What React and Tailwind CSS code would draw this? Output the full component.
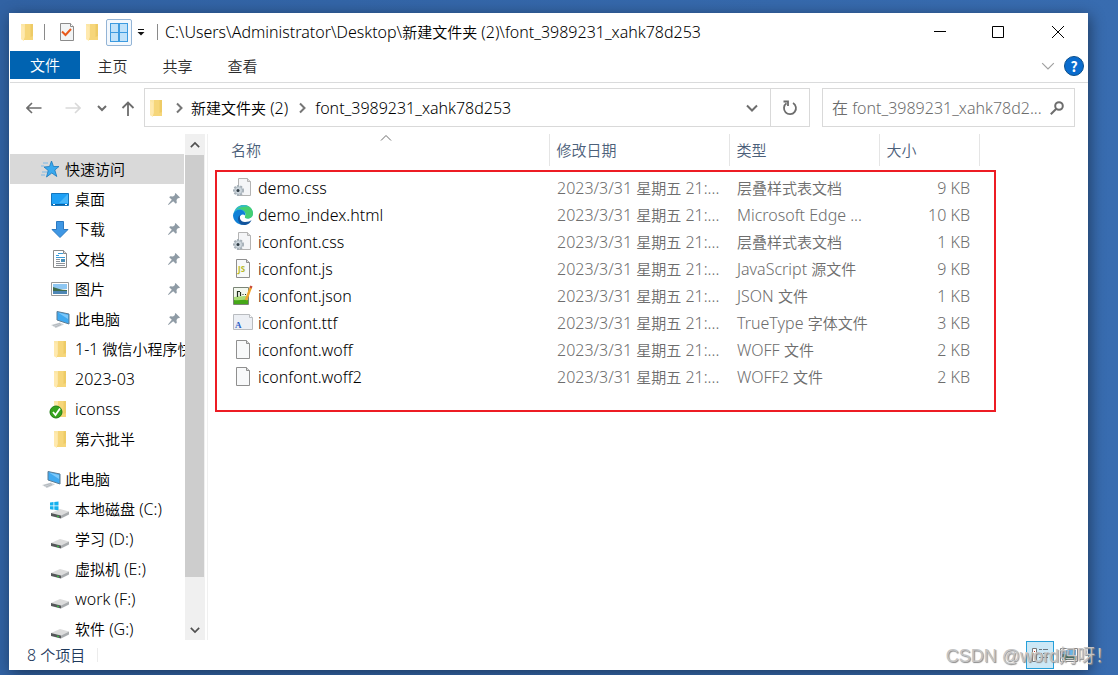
import React from 'react';

const files = [
  { name: 'demo.css', icon: 'css', type: '层叠样式表文档', size: '9 KB' },
  { name: 'demo_index.html', icon: 'edge', type: 'Microsoft Edge ...', size: '10 KB' },
  { name: 'iconfont.css', icon: 'css', type: '层叠样式表文档', size: '1 KB' },
  { name: 'iconfont.js', icon: 'js', type: 'JavaScript 源文件', size: '9 KB' },
  { name: 'iconfont.json', icon: 'json', type: 'JSON 文件', size: '1 KB' },
  { name: 'iconfont.ttf', icon: 'ttf', type: 'TrueType 字体文件', size: '3 KB' },
  { name: 'iconfont.woff', icon: 'blank', type: 'WOFF 文件', size: '2 KB' },
  { name: 'iconfont.woff2', icon: 'blank', type: 'WOFF2 文件', size: '2 KB' },
];

const quickAccess = [
  { label: '桌面', icon: 'desktop', pinned: true },
  { label: '下载', icon: 'download', pinned: true },
  { label: '文档', icon: 'document', pinned: true },
  { label: '图片', icon: 'picture', pinned: true },
  { label: '此电脑', icon: 'computer', pinned: true },
  { label: '1-1 微信小程序快', icon: 'folder' },
  { label: '2023-03', icon: 'folder' },
  { label: 'iconss', icon: 'synced' },
  { label: '第六批半', icon: 'folder' },
];

const drives = [
  { label: '本地磁盘 (C:)', icon: 'system' },
  { label: '学习 (D:)', icon: 'drive' },
  { label: '虚拟机 (E:)', icon: 'drive' },
  { label: 'work (F:)', icon: 'drive' },
  { label: '软件 (G:)', icon: 'drive' },
];

// Latin runs get their own face and size, Chinese runs inherit from the page
function Mixed({ text }) {
  return text.split(/([\u4e00-\u9fff]+)/).map((run, idx) =>
    idx % 2 ? (
      run
    ) : (
      <span key={idx} className="font-['Noto_Sans',sans-serif] text-[16px]">
        {run}
      </span>
    )
  );
}

const folderShape = (
  <g>
    <path d="M5 1h10v16H5z" fill="#f6d67a" />
    <path d="M12.500 1H15v12l-2.500 1z" fill="#eecb66" />
    <path d="M3 1h4v13l-1.500 3.500L3 16z" fill="#fbe6a6" />
    <path d="M3 2l3 2v14l-3-2z" fill="#ffe9ae" />
  </g>
);

const driveShape = (
  <g>
    <path d="M0 13l9-4 9 2.500-8 4z" fill="#dcdcdc" />
    <path d="M0 13l10 2.500v3L0 16z" fill="#55585a" />
    <path d="M10 15.500l8-4v3l-8 4z" fill="#a9acae" />
    <path d="M6 15.500l2 .5v1.500l-2-.5z" fill="#3fae49" />
  </g>
);

const pageShape = (
  <g>
    <path d="M3.500 .5h10l3 3v15h-13z" fill="#f8f9fa" stroke="#8f8f8f" />
    <path d="M13.500 .5v3h3" fill="#dadada" stroke="#8f8f8f" />
  </g>
);

const sideIcons = {
  star: (
    <g>
      <path d="M9.500 1l2 5.500h5.500L12.800 10l2 6.500-5-3.500-5.300 4 1.700-6.500L2 7l5.500-.5z" fill="#3aa9ee" stroke="#1a78bd" strokeWidth="0.8" />
      <path d="M1 3h5M-1 6h3M0 12h5M-1 15h4" stroke="#7cb9e6" />
    </g>
  ),
  desktop: (
    <g>
      <path d="M.5 3.500h17v12H.5z" fill="#1ea0f5" stroke="#1476bd" />
      <path d="M17 4v9L8 13z" fill="#47b6fa" />
      <path d="M1 14.500h16" stroke="#0b5f9f" />
      <path d="M2 14.500h2M14 14.500h2" stroke="#fff" />
    </g>
  ),
  download: <path d="M5.500 1.500h7v8H17l-8 8-8-8h4.500z" fill="#3f97e4" stroke="#2c79c0" />,
  document: (
    <g>
      <path d="M2.500 .5h10l3 3v14h-13z" fill="#fff" stroke="#8a8a8a" />
      <path d="M12.500 .5v3h3" fill="#ddd" stroke="#8a8a8a" />
      <path d="M7 3.500h5M5 5.500h3M5 7.500h9" stroke="#3b9bd8" />
      <path d="M5 9.500h4M5 11.500h4M5 13.500h9M5 15.500h9" stroke="#8d9299" />
      <path d="M10 9h4v3h-4z" fill="#4a90b8" />
    </g>
  ),
  picture: (
    <g>
      <path d="M.5 2.500h17v13H.5z" fill="#fff" stroke="#9a9a9a" />
      <path d="M2 4h14v5H2z" fill="#8fc7f2" />
      <path d="M2 7c4 1 8 3 14 3v1H2z" fill="#3f6b4b" />
      <path d="M2 11h14v3H2z" fill="#4d86b5" />
    </g>
  ),
  computer: (
    <g>
      <path d="M6 1.500l12 2.500v10L6 10z" fill="#3fa9f0" stroke="#5d7c94" />
      <path d="M7 2.500l10 2.500v4z" fill="#7cc8fa" />
      <path d="M0 15l9-2.500 4 2-8 3.500z" fill="#cfd4d8" />
      <path d="M2 15.500l7-2M4 17l6-2.500" stroke="#a6acb1" strokeWidth="0.7" />
    </g>
  ),
  folder: folderShape,
  synced: (
    <g>
      {folderShape}
      <circle cx="5" cy="12" r="6" fill="#36a41d" stroke="#1f7d12" />
      <path d="M2 12l2.500 3L9 8.500" fill="none" stroke="#fff" strokeWidth="1.800" />
    </g>
  ),
  drive: driveShape,
  system: (
    <g>
      {driveShape}
      <path d="M-1 2.500l3.500-.5v3.500H-1zM3.300 1.900L7.500 1.500v4H3.300zM-1 6.300h3.500v3.500L-1 9.300zM3.300 6.300h4.200v4l-4.200-.5z" fill="#16b1ee" />
    </g>
  ),
};

const fileIcons = {
  css: (
    <g>
      <path d="M5.500 .5h9l3 3v14h-12z" fill="#f4f5f7" stroke="#b4b4b4" />
      <path d="M14.500 .5v3h3" fill="#ddd" stroke="#b4b4b4" />
      <circle cx="5.500" cy="12.500" r="4.500" fill="#d6dde3" stroke="#a3adb5" strokeWidth="2" strokeDasharray="2 1.200" />
      <circle cx="5.500" cy="12.500" r="3.800" fill="#cdd6dd" stroke="#a7b1b9" strokeWidth="0.700" />
      <circle cx="5" cy="12.500" r="1.500" fill="#2f3b44" />
    </g>
  ),
  edge: (
    <g>
      <path d="M1 7C2.500 2.500 6.500 0 10.500 0 16 0 20 4 20 8.500c0 3-2.500 5-5.500 5-2 0-3-1-2.500-2 1.500-2 .5-5-3-5.500C5 5.500 1.500 7 0 10z" fill="#2fb6d3" />
      <path d="M11 0c5 0 9 4 9 8.500 0 3-2.500 5-5.500 5-2 0-3-1-2.500-2C14 8 11 4 6 4c-1 0-2 .2-3 .7C5 1.500 8 0 11 0z" fill="#45cf72" />
      <path d="M3 4.700C5 1.500 8 0 11 0c2 0 4 .7 5.500 2C13 1 7 2 3 4.700z" fill="#34b9c9" />
      <path d="M0 10c1-4 5-6 8.500-5 3 .8 4.500 3.500 3.500 5.500C10 8.500 6.500 10 6.500 13.500c0 3 2 5.500 5 6.300C5 20.500 0 16 0 10z" fill="#0f80d7" />
      <path d="M7.500 10C6 12 7 17 12 17c3 0 5.500-1 6.500-2-1 3-4 5-7.500 5-4 0-6-3.500-6-6 0-2 1-3.500 2.500-4z" fill="#12549c" />
    </g>
  ),
  js: (
    <g>
      {pageShape}
      <text x="5" y="13" fontSize="8" fontWeight="700" fill="#b8b927" fontFamily="Noto Sans">JS</text>
    </g>
  ),
  json: (
    <g>
      <path d="M.5 1.500h15v17H.5z" fill="#f3f8ee" stroke="#7b8577" />
      <path d="M1 13c5-1 10-2 14-1v6H1z" fill="#45a818" />
      <path d="M1 11c5-1 10-1 14-1v4c-5-1-9 1-14 0z" fill="#a9dc76" />
      <path d="M4.500 5v6M7.500 6v4M4 5.500h3M9.500 8.500h1M12 8.500h1" stroke="#22311d" strokeWidth="1.200" />
      <path d="M18 1l-5 13" stroke="#f0a52b" strokeWidth="2.400" />
      <path d="M18.500 0l-1 2" stroke="#c84a3a" strokeWidth="2.400" />
    </g>
  ),
  ttf: (
    <g>
      <path d="M.5 1.500h16l3 3v12H.5z" fill="#eceff4" stroke="#b9bcc0" />
      <path d="M16.500 1.500v3h3" fill="#fff" stroke="#b9bcc0" />
      <text x="2" y="15" fontSize="9" fontWeight="700" fill="#2b5fc6" fontFamily="Liberation Serif">A</text>
    </g>
  ),
  blank: pageShape,
};

function SideIcon({ name }) {
  return (
    <svg viewBox="0 0 18 18" className="h-[18px] w-[18px] shrink-0 overflow-visible" aria-hidden="true">
      {sideIcons[name]}
    </svg>
  );
}

function Pin() {
  return (
    <svg viewBox="0 0 12 12" className="h-3 w-3 shrink-0" aria-hidden="true">
      <path d="M7.500 0L12 4.500l-1.200.7-.8-.2L8.500 7l.3 2.800-1 1-2.600-2.600L.5 12 0 11.500l3.800-4.700L1.200 4.200l1-1L5 3.500l2-1.500-.2-.9z" fill="#8f9ba5" />
    </svg>
  );
}

function Chevron({ d, className }) {
  return (
    <svg viewBox="0 0 12 12" className={className} fill="none" stroke="currentColor" aria-hidden="true">
      <path d={d} />
    </svg>
  );
}

const DOWN = 'M1 3.500l5 5 5-5';
const UP = 'M1 8.500l5-5 5 5';
const RIGHT = 'M4 1.500l4.500 4.500-4.500 4.500';

function SideItem({ label, icon, pinned }) {
  return (
    <li>
      <button className="flex h-[30px] w-full items-center gap-1.5 overflow-hidden pl-[41px] text-left whitespace-nowrap">
        <SideIcon name={icon} />
        <span className="min-w-0 flex-1 overflow-hidden">
          <Mixed text={label} />
        </span>
        {pinned && (
          <span className="pr-[5px]">
            <Pin />
          </span>
        )}
      </button>
    </li>
  );
}

function TitleBar() {
  return (
    <header className="flex h-[38px] shrink-0 items-center pl-2">
      <div className="flex flex-1 items-center overflow-hidden whitespace-nowrap">
        <SideIcon name="folder" />
        <span className="ml-2 h-4 w-px bg-[#8a8a8a]" />
        <button aria-label="属性" className="ml-3.5">
          <svg viewBox="0 0 16 18" className="h-[18px] w-4">
            <path d="M1.500 .5h10l3 3v14h-13z" fill="#f2f4f5" stroke="#8b8b8b" />
            <path d="M11.500 .5v3h3" fill="#fff" stroke="#8b8b8b" />
            <path d="M3 8.500l3.500 3.500L12 6" fill="none" stroke="#e8591a" strokeWidth="2" />
          </svg>
        </button>
        <button aria-label="新建文件夹" className="ml-2">
          <SideIcon name="folder" />
        </button>
        <button aria-label="视图" className="ml-[5px] flex h-[27px] w-[26px] items-center justify-center rounded-xs border border-[#93b4d6] bg-[#f3f8fd]">
          <svg viewBox="0 0 18 19" className="h-[19px] w-[18px]">
            <path d="M0 0h18v19H0z" fill="#3d9be0" />
            <path d="M1 1h7v8H1zM10 1h7v8h-7zM1 10h7v8H1zM10 10h7v8h-7z" fill="#c0e2fa" />
          </svg>
        </button>
        <button aria-label="自定义快速访问工具栏" className="ml-[5px]">
          <svg viewBox="0 0 8 8" className="h-2 w-2">
            <path d="M1 1.500h6" stroke="#111" />
            <path d="M.5 4h7L4 7.500z" fill="#111" />
          </svg>
        </button>
        <span className="ml-3 h-4 w-px bg-[#8a8a8a]" />
        <h1 className="ml-[7px]">
          <Mixed text="C:\Users\Administrator\Desktop\新建文件夹 (2)\font_3989231_xahk78d253" />
        </h1>
      </div>
      <div className="flex">
        <button aria-label="最小化" className="flex h-9 w-[58px] items-center justify-center">
          <svg viewBox="0 0 12 12" className="h-3 w-3">
            <path d="M0 5.500h12" stroke="#000" />
          </svg>
        </button>
        <button aria-label="最大化" className="flex h-9 w-[58px] items-center justify-center">
          <svg viewBox="0 0 12 12" className="h-3 w-3">
            <path d="M.5 .5h11v11H.5z" fill="none" stroke="#000" />
          </svg>
        </button>
        <button aria-label="关闭" className="flex h-9 w-[61px] items-center justify-center">
          <svg viewBox="0 0 12 12" className="h-3 w-3">
            <path d="M0 0l12 12M12 0L0 12" stroke="#000" />
          </svg>
        </button>
      </div>
    </header>
  );
}

function Ribbon() {
  return (
    <nav className="flex h-8 shrink-0 items-start border-b border-[#dadbdc] text-[#2b2b2b]">
      <button className="h-7 w-[70px] bg-[#0063b1] text-white">文件</button>
      {['主页', '共享', '查看'].map((tab) => (
        <button key={tab} className="h-[30px] w-[65px]">
          {tab}
        </button>
      ))}
      <div className="ml-auto flex h-[30px] items-center gap-[9px] pr-1">
        <button aria-label="展开功能区" className="text-[#a0a0a0]">
          <Chevron d={DOWN} className="h-3.5 w-3.5" />
        </button>
        <button aria-label="帮助" className="flex h-5 w-5 items-center justify-center rounded-full border border-[#0b4f8c] bg-[#0a6cce] text-sm font-bold text-white">
          ?
        </button>
      </div>
    </nav>
  );
}

function AddressBar() {
  return (
    <div className="flex h-[51px] shrink-0 items-start pt-[5px] pr-[13px]">
      <div className="flex h-[39px] w-[134px] items-center pl-4 text-[#6d6d6d]">
        <button aria-label="后退">
          <svg viewBox="0 0 16 16" className="h-4 w-4" fill="none" stroke="currentColor" strokeWidth="1.600">
            <path d="M15.500 8H1M6 3L1 8l5 5" />
          </svg>
        </button>
        <button aria-label="前进" disabled className="ml-[23px] text-[#d9d9d9]">
          <svg viewBox="0 0 16 16" className="h-4 w-4" fill="none" stroke="currentColor" strokeWidth="1.600">
            <path d="M.5 8H15M10 3l5 5-5 5" />
          </svg>
        </button>
        <button aria-label="最近浏览的位置" className="ml-[15px]">
          <Chevron d="M2 4l4 4 4-4" className="h-3 w-3 stroke-2" />
        </button>
        <button aria-label="上移" className="ml-3">
          <svg viewBox="0 0 16 16" className="h-4 w-4" fill="none" stroke="currentColor" strokeWidth="1.800">
            <path d="M8 16V2.500M2.500 8L8 2.500 13.500 8" />
          </svg>
        </button>
      </div>
      <div className="flex h-[39px] min-w-0 flex-1 items-center border border-[#d9d9d9]">
        <span className="ml-0.5">
          <SideIcon name="folder" />
        </span>
        <Chevron d={RIGHT} className="ml-2 h-3 w-3 stroke-2 text-[#767676]" />
        <button className="ml-1.5 whitespace-nowrap">
          <Mixed text="新建文件夹 (2)" />
        </button>
        <Chevron d={RIGHT} className="ml-2 h-3 w-3 stroke-2 text-[#767676]" />
        <button className="ml-[7px] whitespace-nowrap">
          <Mixed text="font_3989231_xahk78d253" />
        </button>
        <button aria-label="历史记录" className="mr-3 ml-auto text-[#6d6d6d]">
          <Chevron d={DOWN} className="h-3 w-3 stroke-2" />
        </button>
        <button aria-label="刷新" className="flex h-full w-[39px] items-center justify-center border-l border-[#d9d9d9] text-[#6d6d6d]">
          <svg viewBox="0 0 16 16" className="h-4 w-4" fill="none" stroke="currentColor" strokeWidth="1.800">
            <path d="M11 3a6 6 0 1 1-6.500.3M1.500 1.500H6V6" />
          </svg>
        </button>
      </div>
      <label className="ml-3 flex h-[39px] w-[253px] items-center border border-[#d9d9d9] pr-2.5 pl-[9px] text-[#6d6d6d]">
        <input
          type="text"
          aria-label="搜索"
          placeholder="在 font_3989231_xahk78d2..."
          className="min-w-0 flex-1 font-['Noto_Sans','Noto_Sans_CJK_SC',sans-serif] text-[16px] outline-none placeholder:text-[#6d6d6d]"
        />
        <svg viewBox="0 0 14 14" className="h-3.5 w-3.5 shrink-0" fill="none" stroke="currentColor" strokeWidth="2">
          <circle cx="9" cy="5" r="3.800" />
          <path d="M6.300 7.700L.8 13.200" />
        </svg>
      </label>
    </div>
  );
}

function Sidebar() {
  return (
    <aside className="flex w-[198px] shrink-0 border-r border-[#f0f0f0]">
      <div className="min-w-0 flex-1 overflow-hidden pt-5">
        <button className="flex h-[30px] w-[174px] items-center gap-1 bg-[#d9d9d9] pl-8 text-left">
          <SideIcon name="star" />
          <span className="pl-px">快速访问</span>
        </button>
        <ul>
          {quickAccess.map((item) => (
            <SideItem key={item.label} {...item} />
          ))}
        </ul>
        <button className="mt-2.5 flex h-[30px] w-full items-center gap-1 pl-8 text-left">
          <SideIcon name="computer" />
          <span className="pl-px">此电脑</span>
        </button>
        <ul>
          {drives.map((item) => (
            <SideItem key={item.label} {...item} />
          ))}
        </ul>
      </div>
      {/* scrollbar */}
      <div className="mr-0.5 flex w-5 shrink-0 flex-col bg-[#f0f0f0] text-[#505050]">
        <button aria-label="向上滚动" className="flex h-[21px] items-center justify-center">
          <Chevron d={UP} className="h-2.5 w-2.5 stroke-2" />
        </button>
        <div className="flex-1">
          <div className="mr-px h-[91%] bg-[#cdcdcd]" />
        </div>
        <button aria-label="向下滚动" className="flex h-[21px] items-center justify-center">
          <Chevron d={DOWN} className="h-2.5 w-2.5 stroke-2" />
        </button>
      </div>
    </aside>
  );
}

function FileList() {
  return (
    <main className="relative min-w-0 flex-1 overflow-hidden pl-[15px]">
      <table className="w-[756px] table-fixed border-collapse text-left whitespace-nowrap">
        <colgroup>
          <col className="w-[326px]" />
          <col className="w-[180px]" />
          <col className="w-[150px]" />
          <col className="w-[100px]" />
        </colgroup>
        <thead className="text-[#4c607a]">
          <tr className="h-8">
            <th className="relative border-r border-[#e5e5e5] pl-2 font-[350]">
              名称
              <Chevron d={UP} className="absolute -top-0.5 left-1/2 h-3 w-3 -translate-x-1/2 text-[#6d6d6d]" />
            </th>
            <th className="border-r border-[#e5e5e5] pl-[7px] font-[350]">修改日期</th>
            <th className="border-r border-[#e5e5e5] pl-[7px] font-[350]">类型</th>
            <th className="border-r border-[#e5e5e5] pl-[7px] font-[350]">大小</th>
          </tr>
        </thead>
        <tbody className="text-[#6d6d6d]">
          <tr className="h-2" aria-hidden="true" />
          {files.map((file) => (
            <tr key={file.name} className="h-[27px]">
              <td className="pl-2.5 text-black">
                <div className="flex items-center gap-[5px]">
                  <svg viewBox="0 0 20 20" className="h-5 w-5 shrink-0 overflow-visible" aria-hidden="true">
                    {fileIcons[file.icon]}
                  </svg>
                  <Mixed text={file.name} />
                </div>
              </td>
              <td className="pl-2">
                <Mixed text="2023/3/31 星期五 21:..." />
              </td>
              <td className="pl-2">
                <Mixed text={file.type} />
              </td>
              <td className="pr-[9px] text-right">
                <Mixed text={file.size} />
              </td>
            </tr>
          ))}
        </tbody>
      </table>
      {/* highlight frame around the listed files */}
      <div className="pointer-events-none absolute top-9 left-[7px] h-[242px] w-[781px] border-2 border-[#ed1c24]" />
    </main>
  );
}

function StatusBar() {
  return (
    <footer className="flex h-[30px] shrink-0 items-center pl-[17px] text-[#1e395b]">
      <span>
        <Mixed text="8 个项目" />
      </span>
      <span className="ml-3 h-3.5 w-px bg-[#ececec]" />
      <div className="mr-2.5 ml-auto flex items-center gap-1.5">
        <button aria-label="详细信息" className="flex h-7 w-7 items-center justify-center border border-[#26a0da] bg-[#cce8f6]">
          <svg viewBox="0 0 18 16" className="h-4 w-[18px]" fill="none">
            <path d="M1.500 1.500h4v13h-4z" fill="#fff" stroke="#777" />
            <path d="M8 2.500h3M12 2.500h5M8 6.500h3M12 6.500h5M8 10.500h3M12 10.500h5" stroke="#6b7780" />
            <path d="M3 4.500h1M3 11.500h1" stroke="#c0392b" />
          </svg>
        </button>
        <button aria-label="大缩略图">
          <svg viewBox="0 0 18 14" className="h-3.5 w-[18px]">
            <path d="M.5 .5h17v13H.5z" fill="#fff" stroke="#888" />
            <path d="M2 2h14v5H2z" fill="#6bb3ea" />
            <path d="M2 6c5 0 9 3 14 2v4H2z" fill="#3f6b5b" />
          </svg>
        </button>
      </div>
    </footer>
  );
}

export default function App() {
  return (
    <div className="relative flex h-screen overflow-hidden bg-linear-to-r from-[#3162a3] to-[#386cb0] pt-[13px] pr-[30px] pb-[5px] pl-[9px] font-['Noto_Sans_CJK_SC',sans-serif] text-[15px] leading-5 font-[350] text-black">
      <div className="flex min-w-0 flex-1 flex-col bg-white pl-px shadow-[2px_3px_14px_rgba(0,0,0,0.45)]">
        <TitleBar />
        <Ribbon />
        <AddressBar />
        <div className="flex min-h-0 flex-1">
          <Sidebar />
          <FileList />
        </div>
        <StatusBar />
      </div>
      <div className="pointer-events-none absolute right-[5px] bottom-[7px] font-['Liberation_Sans','Noto_Sans_CJK_SC',sans-serif] text-lg leading-6 whitespace-nowrap text-[#c4c4c4] [text-shadow:1px_1px_1px_#888888]">
        CSDN @word妈呀！
      </div>
    </div>
  );
}
